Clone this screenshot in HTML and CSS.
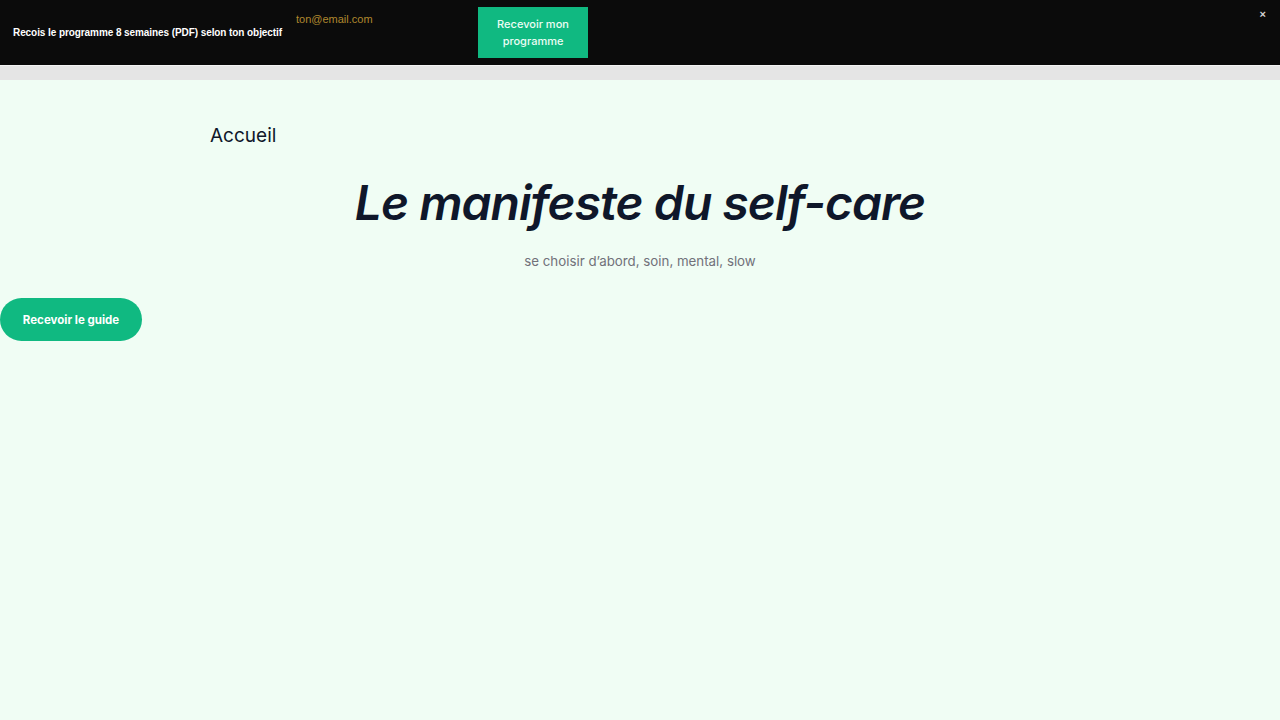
FILE: index.html
```html
<!DOCTYPE html>
<html lang="fr">
<head>
<meta charset="utf-8">
<title>Le manifeste du self-care</title>
<link rel="stylesheet" href="styles.css">
</head>
<body>
<div class="banner">
  <p class="banner-text">Recois le programme 8 semaines (PDF) selon ton objectif</p>
  <form class="banner-form">
    <input class="banner-email" type="email" placeholder="ton@email.com">
    <button class="banner-btn" type="button">Recevoir mon programme</button>
  </form>
  <button class="banner-close" type="button">×</button>
</div>
<div class="strip"></div>
<main class="page">
  <div class="container">
    <p class="crumb">Accueil</p>
    <h1 class="title">Le manifeste du self-care</h1>
    <p class="subtitle">se choisir d’abord, soin, mental, slow</p>
  </div>
  <a class="guide-btn" href="#">Recevoir le guide</a>
</main>
</body>
</html>
```

FILE: styles.css
```css
* { box-sizing: border-box; }
html, body { margin: 0; padding: 0; }
body {
  background: #f0fdf4;
  font-family: Inter, "Noto Sans", sans-serif;
  color: #0f172a;
  min-height: 720px;
}
.banner {
  position: relative;
  height: 65px;
  background: #0b0b0b;
  display: flex;
  align-items: center;
  padding-left: 13px;
}
.banner-text {
  margin: 0;
  font-family: "Liberation Sans", Arial, sans-serif;
  font-weight: 700;
  font-size: 10px;
  letter-spacing: -0.08px;
  color: #ffffff;
}
.banner-form {
  display: flex;
  align-items: flex-start;
  align-self: stretch;
  margin-left: 14px;
  padding-top: 7px;
}
.banner-email {
  width: 182px;
  margin-top: 6px;
  padding: 0;
  border: 0;
  background: transparent;
  font-family: "Liberation Sans", Arial, sans-serif;
  font-size: 11px;
  color: #ffffff;
  outline: none;
}
.banner-email::placeholder { color: #b0882e; }
.banner-btn {
  width: 110px;
  height: 51px;
  border: 0;
  background: #10b981;
  color: #ecfdf5;
  font-family: Inter, sans-serif;
  font-weight: 500;
  font-size: 11px;
  line-height: 17px;
  padding: 0 18px;
  cursor: pointer;
}
.banner-close {
  position: absolute;
  top: 7px;
  right: 14px;
  border: 0;
  background: transparent;
  color: #d4d4d4;
  font-family: "Liberation Sans", Arial, sans-serif;
  font-size: 11px;
  font-weight: 700;
  padding: 0;
  line-height: 14px;
}
.strip {
  height: 15px;
  background: #e5e5e5;
  border-top: 1px solid #f3f3f3;
}
.page {
  padding-top: 42px;
}
.container {
  width: 860px;
  margin: 0 auto;
}
.crumb {
  margin: 0;
  font-size: 19px;
  line-height: 28px;
  color: #0f172a;
}
.title {
  margin: 25px 0 0;
  text-align: center;
  font-style: italic;
  font-weight: 600;
  font-size: 48px;
  line-height: 56px;
  letter-spacing: -0.02em;
  color: #0f172a;
}
.subtitle {
  margin: 20px 0 0;
  text-align: center;
  font-size: 13.3px;
  line-height: 20px;
  color: #71717a;
}
.guide-btn {
  display: inline-flex;
  align-items: center;
  justify-content: center;
  margin-top: 27px;
  width: 142px;
  height: 43px;
  border-radius: 22px;
  background: #10b981;
  color: #ffffff;
  font-weight: 700;
  font-size: 11.5px;
  text-decoration: none;
}
```
